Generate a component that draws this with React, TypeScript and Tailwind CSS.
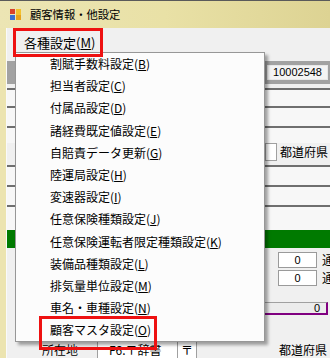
import React from "react";

const menuItems: [string, string][] = [
  ["割賦手数料設定", "B"],
  ["担当者設定", "C"],
  ["付属品設定", "D"],
  ["諸経費既定値設定", "E"],
  ["自賠責データ更新", "G"],
  ["陸運局設定", "H"],
  ["変速器設定", "I"],
  ["任意保険種類設定", "J"],
  ["任意保険運転者限定種類設定", "K"],
  ["装備品種類設定", "L"],
  ["排気量単位設定", "M"],
  ["車名・車種設定", "N"],
  ["顧客マスタ設定", "O"],
];

function FormIcon() {
  return (
    <svg width="11" height="11" viewBox="0 0 11 11">
      <rect x="0" y="0" width="5" height="5" fill="#d9412b" />
      <rect x="0" y="6" width="5" height="5" fill="#3b6fd0" />
      <rect x="6" y="0" width="5" height="11" fill="#f2c12e" />
      <rect x="6" y="6" width="5" height="5" fill="#e8a21c" />
    </svg>
  );
}

function Lined({ h }: { h: string }) {
  return <div className={`${h} border-t-2 border-[#6f6f6f] bg-[#f7f7f7]`} />;
}

function NumRow() {
  return (
    <div className="h-[16px] flex justify-end">
      <div className="w-[39px] bg-white border border-[#9a9a9a] flex items-center justify-center text-[11px] font-['Liberation_Sans',sans-serif]">
        0
      </div>
      <div className="w-[13px] pl-[5px] text-[12px] leading-[16px] overflow-hidden whitespace-nowrap">通常</div>
    </div>
  );
}

export default function App() {
  return (
    <div className="relative w-[330px] h-[358px] overflow-hidden bg-[#f0f0f0] text-black font-['Noto_Sans_CJK_JP','Noto_Sans',sans-serif]">
      {/* title bar */}
      <div className="h-[28px] flex items-center gap-[9px] pl-[10px] border-t border-[#5a5a5a] bg-gradient-to-r from-[#ece5b4] via-[#e9e1a6] to-[#ddd393]">
        <FormIcon />
        <span className="text-[11.3px] leading-none">顧客情報・他設定</span>
      </div>

      <div className="flex h-[330px]">
        <div className="w-[7px] bg-[#ece4b0] border-r border-[#fafafa]" />
        <div className="flex-1 flex flex-col">
          {/* menu strip */}
          <div className="h-[29px] flex items-center pl-[17px] text-[13px]">
            <span>
              各種設定(<span className="underline">M</span>)
            </span>
          </div>

          {/* form (mostly behind the dropdown) */}
          <div className="h-[4px]" />
          <div className="h-[23px] bg-[#a2a2a2] flex items-center justify-end pr-[2px]">
            <div className="w-[61px] h-[15px] bg-[#f4f4f4] border border-[#e8e8e8] flex items-center justify-end pr-[5px] text-[11px] font-['Liberation_Sans',sans-serif]">
              10002548
            </div>
          </div>
          <div className="h-[4px]" />
          <Lined h="h-[18px]" />
          <Lined h="h-[20px]" />
          <Lined h="h-[17px]" />
          <div className="h-[18px] flex justify-end">
            <div className="w-[12px] bg-white border border-[#a0a0a0]" />
            <div className="w-[53px] pl-[3px] text-[12px] leading-[18px] whitespace-nowrap overflow-hidden">都道府県</div>
          </div>
          <div className="h-[4px]" />
          <Lined h="h-[20px]" />
          <Lined h="h-[20px]" />
          <Lined h="h-[25px]" />
          <div className="h-[18px] bg-[#007a00]" />
          <div className="h-[4px]" />
          <NumRow />
          <div className="h-[2px]" />
          <NumRow />
          <div className="h-[16px]" />
          <div className="h-[13px] flex justify-end pr-[2px]">
            <div className="w-[63px] bg-[#ececec] border-t border-[#a0a0a0] border-r-2 border-b-2 border-r-[#800080] border-b-[#800080] flex items-center justify-end pr-[6px] text-[11px] font-['Liberation_Sans',sans-serif]">
              0
            </div>
          </div>
          <div className="h-[27px]" />
          <div className="h-[16px] flex items-center text-[12px] whitespace-nowrap">
            <div className="w-[90px] pl-[35px]">所在地</div>
            <div className="w-[80px] h-full bg-white border-l border-[#a0a0a0] pl-[11px] leading-[16px]">
              F6:〒辞書
            </div>
            <div className="w-[20px] h-full border-x border-[#a0a0a0] bg-white text-center leading-[16px]">〒</div>
            <div className="w-[82px]" />
            <div className="leading-[16px]">都道府県</div>
          </div>
        </div>
      </div>

      {/* dropdown menu */}
      <div className="absolute left-[15px] top-[52px] w-[250px] bg-[#fcfcfc] border border-[#979797] shadow-[3px_3px_3px_rgba(0,0,0,0.35)]">
        {menuItems.map(([label, key]) => (
          <div key={key} className="h-[22.2px] flex items-center pl-[34px] text-[12px] whitespace-nowrap">
            {label}(<span className="underline">{key}</span>)
          </div>
        ))}
      </div>

      {/* red annotation boxes */}
      <div className="absolute left-[13px] top-[28px] w-[90px] h-[29px] border-[3px] border-[#ee1111]" />
      <div className="absolute left-[39px] top-[316px] w-[118px] h-[34px] border-[3px] border-[#ee1111]" />
    </div>
  );
}
